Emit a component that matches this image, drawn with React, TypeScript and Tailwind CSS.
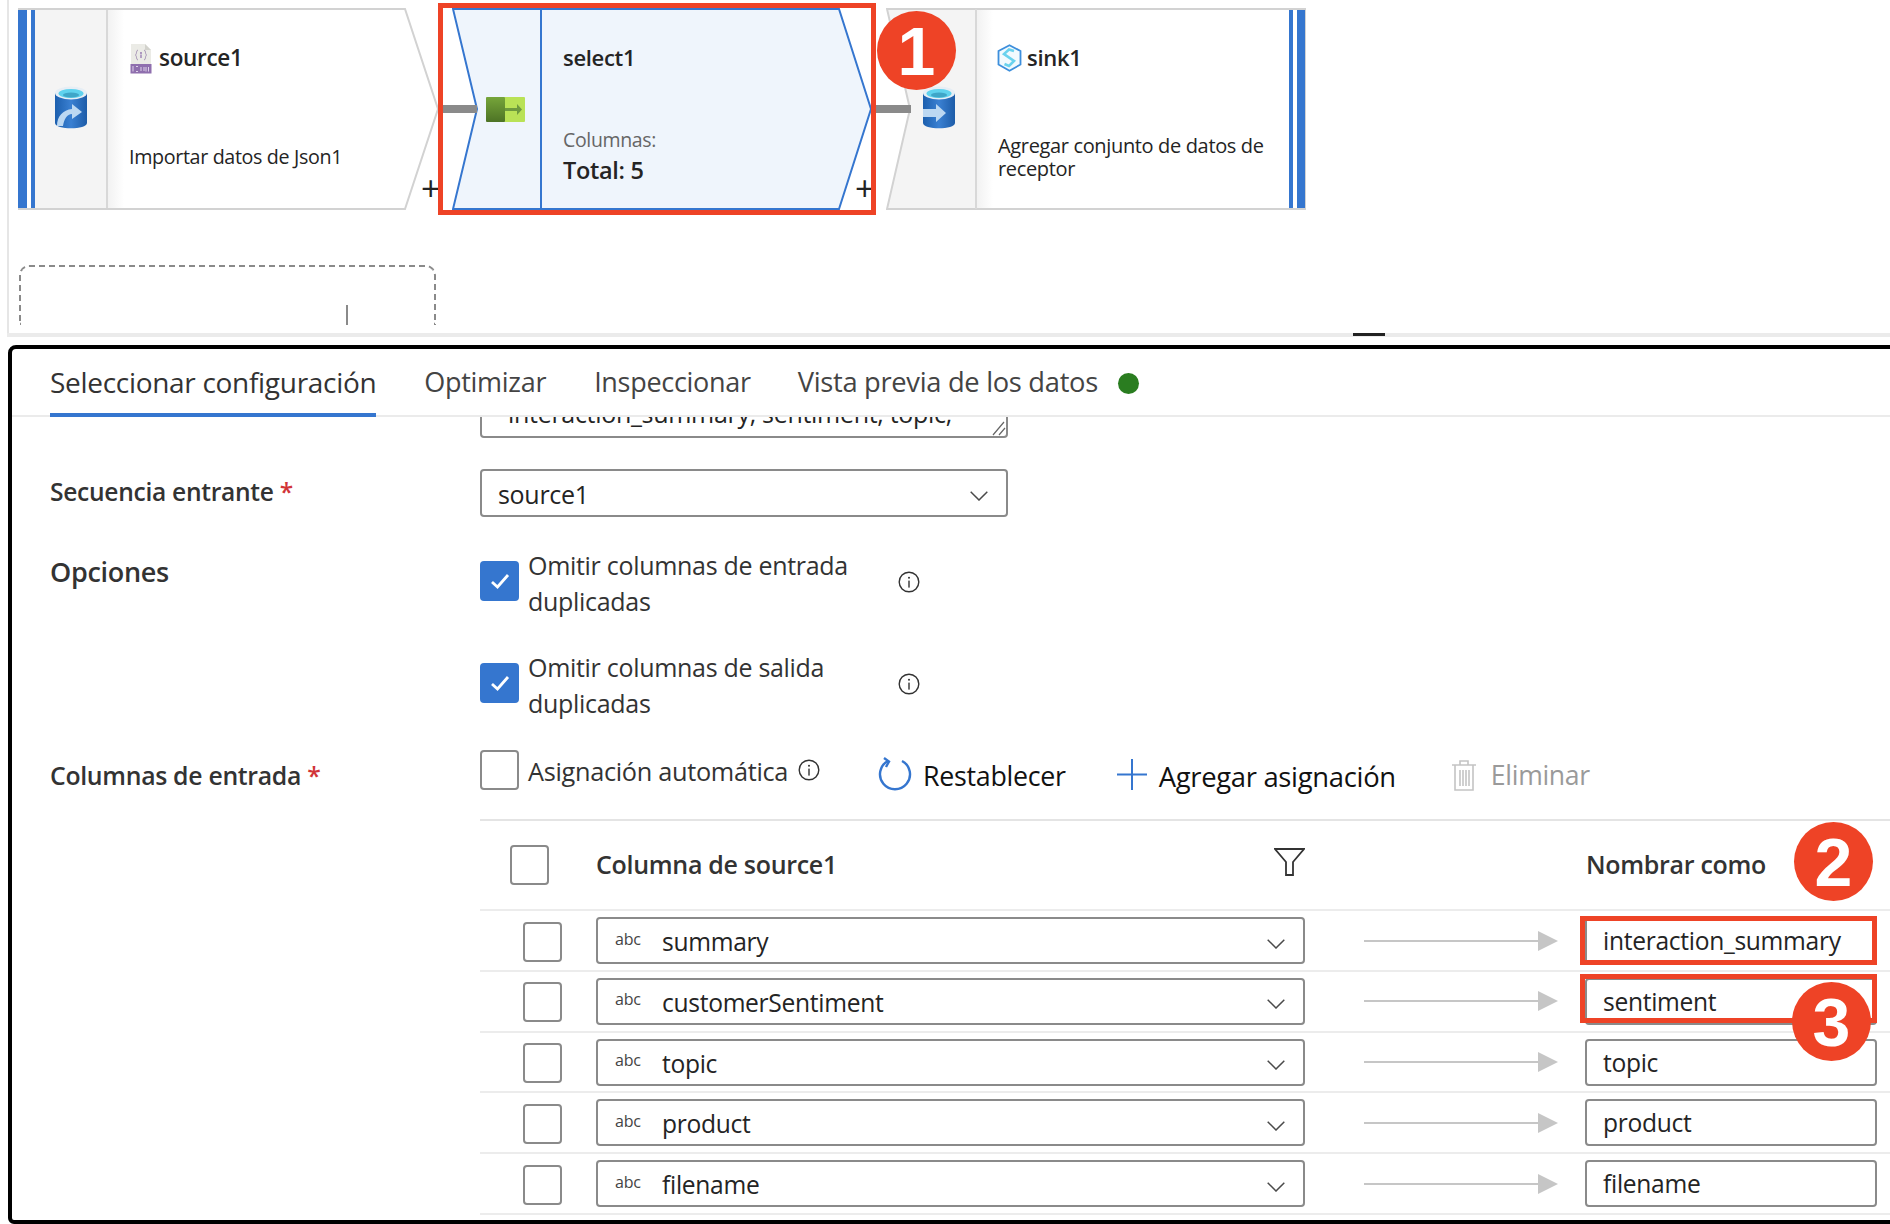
import React from "react";

const BLUE = "#3576cf";

function Chevron() {
  return (
    <svg width="18" height="10" viewBox="0 0 18 10" className="shrink-0">
      <polyline points="0.7,0.7 9,9 17.3,0.7" fill="none" stroke="#4a4a4a" strokeWidth="1.5" />
    </svg>
  );
}

function Info() {
  return (
    <svg width="22" height="22" viewBox="0 0 22 22" className="shrink-0">
      <circle cx="11" cy="11" r="9.8" fill="none" stroke="#333" strokeWidth="1.4" />
      <circle cx="11" cy="6.8" r="1" fill="#333" />
      <rect x="10.3" y="9.6" width="1.4" height="7" fill="#333" />
    </svg>
  );
}

function Check() {
  return (
    <span className="mt-[13px] flex h-[40px] w-[39px] shrink-0 items-center justify-center rounded-[4px] bg-[#3576cf]">
      <svg width="20" height="16" viewBox="0 0 20 16">
        <polyline points="2,9 7.5,14 18,2" fill="none" stroke="#fff" strokeWidth="2.8" />
      </svg>
    </span>
  );
}

function Box() {
  return <span className="block h-[40px] w-[39px] shrink-0 rounded-[4px] border-2 border-[#8a8a8a] bg-white" />;
}

function Cyl({ id, out }: { id: string; out?: boolean }) {
  return (
    <svg width="34" height="43" viewBox="0 0 34 43">
      <defs>
        <linearGradient id={id} x1="0" x2="1" y1="0" y2="0">
          <stop offset="0" stopColor="#1c5fae" />
          <stop offset="0.5" stopColor="#3a80d2" />
          <stop offset="1" stopColor="#1d5ca8" />
        </linearGradient>
      </defs>
      <path d="M1 7 V37 C1 44 33 44 33 37 V7 Z" fill={`url(#${id})`} />
      <ellipse cx="17" cy="7" rx="16" ry="6.5" fill="#e6eef5" />
      <ellipse cx="17" cy="7.5" rx="12.5" ry="4.5" fill="#5fd2ee" />
      <ellipse cx="17" cy="9" rx="8" ry="2.5" fill="#3fa6c8" />
      {out ? (
        <path d="M3 40 C3 30 9 24 18 23 V18 L28 26 L18 33 V28 C13 28 10 33 9 40 Z" fill="#bcd8f2" />
      ) : (
        <path d="M1 23 H14 V18 L24 27 L14 36 V31 H1 Z" fill="#bcd8f2" />
      )}
    </svg>
  );
}

function JsonIcon() {
  return (
    <svg width="22" height="30" viewBox="0 0 22 30" className="shrink-0">
      <path d="M1 0 H15 L21 6 V22 H1 Z" fill="#ebebe6" />
      <path d="M15 0 L21 6 H15 Z" fill="#d2d2cc" />
      <rect x="0.5" y="20" width="21" height="9.5" fill="#8f6fae" />
      <path d="M8 6 C6 6 7 10 5.5 11 C7 12 6 16 8 16 M14 6 C16 6 15 10 16.5 11 C15 12 16 16 14 16" fill="none" stroke="#9a86ad" strokeWidth="0.8" />
      <circle cx="11" cy="9" r="0.9" fill="#8f6fae" />
      <rect x="10.4" y="10.5" width="1.2" height="3.5" fill="#8f6fae" />
      <path d="M3 22 V27.5 M6 22.5 H8 M6 27.5 H8 M11 23 V27 M14 23 V27 M16 23 V27.5 M18.5 23 V27.5" stroke="#e8dff0" strokeWidth="0.9" fill="none" />
    </svg>
  );
}

function SelectIcon() {
  return (
    <svg width="39" height="25" viewBox="0 0 39 25">
      <defs>
        <linearGradient id="selg" x1="0" x2="0" y1="0" y2="1">
          <stop offset="0" stopColor="#76a53a" />
          <stop offset="1" stopColor="#4d7325" />
        </linearGradient>
      </defs>
      <rect x="18" y="0" width="21" height="25" rx="1" fill="#b9e256" />
      <rect x="0" y="0" width="19" height="25" rx="1" fill="url(#selg)" />
      <path d="M19 11 H31 V7 L36 12.5 L31 18 V14 H19 Z" fill="#6e9a3e" />
    </svg>
  );
}

function SinkIcon() {
  return (
    <svg width="25" height="28" viewBox="0 0 25 28" className="shrink-0">
      <path d="M12.5 1.2 L23.5 7 V20.5 L12.5 26.8 L1.5 20.5 V7 Z" fill="#f2fafe" stroke="#3d8fdc" strokeWidth="1.8" />
      <path d="M17 7 L12 5.5 L7 10 L17 17 L12 22 L7.5 20" fill="none" stroke="#6ad2ee" strokeWidth="2.6" />
    </svg>
  );
}

function Badge({ n, className }: { n: number; className: string }) {
  return (
    <div
      className={`absolute z-20 flex h-[79px] w-[79px] items-center justify-center rounded-full bg-[#ee4326] font-['Liberation_Sans',sans-serif] text-[68px] font-bold leading-none text-white ${className}`}
    >
      {n}
    </div>
  );
}

const rows = [
  ["summary", "interaction_summary"],
  ["customerSentiment", "sentiment"],
  ["topic", "topic"],
  ["product", "product"],
  ["filename", "filename"],
];

export default function App() {
  return (
    <div className="relative h-[1224px] w-[1890px] overflow-hidden bg-white font-['Open_Sans',sans-serif] text-[#242424]">
      {/* Canvas: a free diagram surface, the nodes are placed on it */}
      <div className="relative h-[333px]">
        <div className="ml-[7px] h-full border-l-2 border-[#e6e6e6]" />

        {/* source */}
        <div className="absolute left-[18px] top-[8px] h-[202px] w-[422px]">
          <svg width="422" height="202" className="absolute inset-0">
            <polygon points="1,1 387,1 420,101 387,201 1,201" fill="#fff" stroke="#d2d2d2" strokeWidth="2" />
          </svg>
          <div className="relative flex h-full py-[2px]">
            <div className="w-[9px] bg-[#3576cf]" />
            <div className="w-[4px] bg-white" />
            <div className="w-[4px] bg-[#3576cf]" />
            <div className="flex w-[73px] items-center justify-center border-r-2 border-[#d8d8d8] bg-[#f4f4f4] pb-[4px]">
              <Cyl id="c1" out />
            </div>
            <div className="flex w-[280px] flex-col bg-linear-to-r from-[#f2f2f2] to-white to-[16px] pl-[21px] pt-[34px]">
              <div className="flex h-[30px] items-center gap-[7px] pl-[1px]">
                <JsonIcon />
                <span className="mb-[2px] text-[22.5px] font-semibold tracking-[-0.3px]">source1</span>
              </div>
              <div className="mt-[68px] whitespace-nowrap text-[19.7px] tracking-[-0.35px]">Importar datos de Json1</div>
            </div>
          </div>
          <div className="absolute left-[403px] top-[162px] text-[34px] font-normal leading-[36px]">+</div>
        </div>

        {/* connector 1 */}
        <div className="absolute left-[438px] top-[105px] z-10 h-[8px] w-[39px] bg-[#8a8a8a]" />

        {/* select */}
        <div className="absolute left-[452px] top-[8px] h-[202px] w-[421px]">
          <svg width="421" height="202" className="absolute inset-0">
            <polygon points="1,1 387,1 419,101 387,201 1,201 25,101" fill="#eff5fc" stroke="#3576cf" strokeWidth="2" />
            <line x1="89" y1="1" x2="89" y2="201" stroke="#3576cf" strokeWidth="2" />
          </svg>
          <div className="relative flex h-full py-[2px]">
            <div className="flex w-[90px] items-center pl-[34px]">
              <SelectIcon />
            </div>
            <div className="flex flex-col pl-[21px] pt-[32px]">
              <div className="text-[22px] font-semibold leading-[30px] tracking-[-0.3px]">select1</div>
              <div className="mt-[54px] text-[19.5px] leading-[27px] tracking-[-0.35px] text-[#666]">Columnas:</div>
              <div className="mt-[1px] text-[23.5px] font-semibold leading-[32px] tracking-[-0.3px]">Total: 5</div>
            </div>
          </div>
          <div className="absolute left-[403px] top-[162px] text-[34px] leading-[36px]">+</div>
        </div>

        {/* connector 2 */}
        <div className="absolute left-[876px] top-[105px] z-10 h-[8px] w-[35px] bg-[#8a8a8a]" />

        {/* sink */}
        <div className="absolute left-[886px] top-[8px] h-[202px] w-[420px]">
          <svg width="420" height="202" className="absolute inset-0">
            <polygon points="1,1 90,1 90,201 1,201 24,101" fill="#f4f4f4" />
            <polygon points="1,1 419,1 419,201 1,201 24,101" fill="none" stroke="#d2d2d2" strokeWidth="2" />
            <line x1="90" y1="1" x2="90" y2="201" stroke="#d8d8d8" strokeWidth="2" />
          </svg>
          <div className="relative flex h-full py-[2px] pr-[1px]">
            <div className="w-[91px] shrink-0 pl-[36px] pt-[76px]">
              <Cyl id="c2" />
            </div>
            <div className="flex flex-1 flex-col bg-linear-to-r from-[#f2f2f2] to-white to-[16px] pl-[20px] pt-[34px]">
              <div className="flex h-[28px] items-center gap-[5px]">
                <SinkIcon />
                <span className="mb-[2px] text-[22px] font-semibold tracking-[-0.3px]">sink1</span>
              </div>
              <div className="ml-[1px] mt-[62px] w-[280px] text-[20px] leading-[23px] tracking-[-0.35px]">
                Agregar conjunto de datos de receptor
              </div>
            </div>
            <div className="w-[4px] shrink-0 bg-[#3576cf]" />
            <div className="w-[4px] shrink-0 bg-white" />
            <div className="w-[8px] shrink-0 bg-[#3576cf]" />
          </div>
        </div>

        {/* dashed placeholder */}
        <div className="absolute left-[19px] top-[265px] flex h-[60px] w-[417px] items-end rounded-t-[10px] border-2 border-b-0 border-dashed border-[#8a8a8a] pl-[325px]">
          <div className="h-[20px] w-[2px] bg-[#8a8a8a]" />
        </div>

        {/* selection */}
        <div className="absolute left-[438px] top-[3px] z-10 h-[212px] w-[438px] border-[5px] border-[#ee4326]" />
        <Badge n={1} className="left-[877px] top-[11px]" />
      </div>

      {/* Splitter */}
      <div className="ml-[7px] h-[4px] bg-[#ebebeb] pl-[1346px]">
        <div className="h-[3px] w-[32px] bg-[#222]" />
      </div>

      {/* Panel */}
      <div className="ml-[8px] mt-[8px] h-[879px] w-[1900px] overflow-hidden rounded-t-[8px] rounded-bl-[6px] border-4 border-black">
        <div className="flex h-[68px] items-center gap-[48px] border-b-2 border-[#ebebeb] pl-[38px]">
          <div className="relative flex h-full items-center">
            <span className="text-[28px] font-medium tracking-[-0.3px] text-[#333]">Seleccionar configuración</span>
            <div className="absolute bottom-[-2px] left-0 right-0 h-[4px] bg-[#3576cf]" />
          </div>
          <span className="text-[27px] tracking-[-0.3px] text-[#444]">Optimizar</span>
          <span className="text-[27px] tracking-[-0.3px] text-[#444]">Inspeccionar</span>
          <span className="-ml-[1px] flex items-center gap-[20px] text-[27.3px] tracking-[-0.3px] text-[#444]">
            Vista previa de los datos
            <span className="mt-[2px] h-[21px] w-[21px] rounded-full bg-[#2a7d20]" />
          </span>
        </div>

        <div className="h-[805px] overflow-hidden">
          <div className="relative -mt-[20px] ml-[468px] h-[41px] w-[528px] rounded-[4px] border-2 border-[#8a8a8a] pl-[26px] text-[25px] leading-[34px] tracking-[-0.3px]">
            <span className="-mt-[3px] block">interaction_summary, sentiment, topic,</span>
            <svg width="16" height="16" viewBox="0 0 16 16" className="absolute bottom-0 right-0">
              <path d="M14 2 L3 15 M15 8 L9 15" stroke="#666" strokeWidth="1.2" fill="none" />
            </svg>
          </div>

          <div className="mt-[31px] grid grid-cols-[468px_1fr]">
            <div className="pl-[38px] pt-[5px] text-[24.6px] font-semibold tracking-[-0.3px] text-[#333]">
              Secuencia entrante <span className="text-[#d13438]">*</span>
            </div>
            <div className="flex h-[48px] w-[528px] items-center justify-between rounded-[4px] border-2 border-[#8a8a8a] pl-[16px] pr-[18px] text-[25px] tracking-[-0.3px]">
              <span className="mt-[4px]">source1</span>
              <span className="mt-[6px]">
                <Chevron />
              </span>
            </div>

            <div className="mt-[31px] pl-[38px] pt-[4px] text-[27px] font-semibold tracking-[-0.3px] text-[#333]">Opciones</div>
            <div className="mt-[31px] flex h-[72px] items-start">
              <Check />
              <span className="-mt-[1px] ml-[9px] w-[370px] text-[25px] leading-[36px] tracking-[-0.3px] text-[#333]">
                Omitir columnas de entrada duplicadas
              </span>
              <span className="mt-[23px]">
                <Info />
              </span>
            </div>

            <div />
            <div className="mt-[30px] flex h-[72px] items-start">
              <Check />
              <span className="-mt-[1px] ml-[9px] w-[370px] text-[25px] leading-[36px] tracking-[-0.3px] text-[#333]">
                Omitir columnas de salida duplicadas
              </span>
              <span className="mt-[23px]">
                <Info />
              </span>
            </div>

            <div className="mt-[35px] pl-[38px] text-[24.8px] font-semibold tracking-[-0.3px] text-[#333]">
              Columnas de entrada <span className="text-[#d13438]">*</span>
            </div>
            <div className="mt-[27px] flex h-[42px] items-start">
              <div className="flex items-center">
                <Box />
                <span className="ml-[9px] mt-[4px] text-[25.3px] tracking-[-0.3px] text-[#333]">Asignación automática</span>
                <span className="ml-[10px]">
                  <Info />
                </span>
              </div>
              <svg width="34" height="35" viewBox="0 0 34 35" className="ml-[58px] mt-[8px] shrink-0">
                <path d="M10 4 A15 15 0 1 0 24 4" fill="none" stroke={BLUE} strokeWidth="2.4" />
                <path d="M6 1 L11 4.5 L8 10" fill="none" stroke={BLUE} strokeWidth="2.4" />
              </svg>
              <span className="ml-[11px] mt-[7px] text-[26.8px] tracking-[-0.3px] text-[#111]">Restablecer</span>
              <svg width="30" height="31" viewBox="0 0 30 31" className="ml-[51px] mt-[10px] shrink-0">
                <path d="M15 0 V31 M0 15.5 H30" stroke={BLUE} strokeWidth="2" />
              </svg>
              <span className="ml-[12px] mt-[7px] text-[27.4px] tracking-[-0.3px] text-[#111]">Agregar asignación</span>
              <svg width="26" height="33" viewBox="0 0 26 33" className="ml-[55px] mt-[10px] shrink-0">
                <path d="M1 6 H25 M9 6 V2 H17 V6 M4 6 V31 H22 V6 M9 11 V27 M12 11 V27 M15 11 V27 M18 11 V27" fill="none" stroke="#c4c4c4" strokeWidth="1.6" />
              </svg>
              <span className="ml-[14px] mt-[7px] text-[26.6px] tracking-[-0.3px] text-[#9a9a9a]">Eliminar</span>
            </div>
          </div>

          {/* Table */}
          <div className="ml-[468px] mt-[25px] border-t-2 border-[#e4e4e4]">
            <div className="flex h-[90px] items-center border-b-2 border-[#ececec]">
              <div className="ml-[30px]">
                <Box />
              </div>
              <span className="ml-[47px] w-[678px] text-[25px] font-semibold tracking-[-0.3px] text-[#333]">Columna de source1</span>
              <svg width="31" height="28" viewBox="0 0 31 28" className="-mt-[7px] shrink-0">
                <path d="M1 1 H30 L19 14 V27 H12 V14 Z" fill="none" stroke="#333" strokeWidth="1.8" />
              </svg>
              <span className="ml-[281px] text-[25px] font-semibold tracking-[-0.3px] text-[#333]">Nombrar como</span>
            </div>
            {rows.map(([src, dst]) => (
              <div key={src} className="flex h-[60.75px] items-center border-b-2 border-[#ececec]">
                <div className="ml-[43px] mt-[2px]">
                  <Box />
                </div>
                <div className="ml-[34px] flex h-[47px] w-[709px] items-center rounded-[4px] border-2 border-[#8a8a8a] pl-[17px] pr-[18px]">
                  <span className="mb-[4px] w-[47px] text-[16px] tracking-[-0.2px] text-[#444]">abc</span>
                  <span className="mt-[4px] flex-1 text-[24.6px] tracking-[-0.3px]">{src}</span>
                  <span className="mt-[6px]">
                    <Chevron />
                  </span>
                </div>
                <div className="ml-[59px] flex w-[194px] items-center">
                  <div className="h-[2px] flex-1 bg-[#c6c6c6]" />
                  <svg width="20" height="20" viewBox="0 0 20 20" className="shrink-0">
                    <polygon points="0,0 20,10 0,20" fill="#c6c6c6" />
                  </svg>
                </div>
                <div className="ml-[27px] flex h-[47px] w-[292px] items-center rounded-[4px] border-2 border-[#8a8a8a] pl-[16px] text-[24.6px] tracking-[-0.3px]">
                  <span className="mt-[2px]">{dst}</span>
                </div>
              </div>
            ))}
          </div>
        </div>
      </div>

      {/* Annotations drawn over the table */}
      <div className="absolute left-[1580px] top-[916px] h-[49px] w-[297px] border-[5px] border-[#ee4326]" />
      <div className="absolute left-[1580px] top-[974px] h-[49px] w-[297px] border-[5px] border-[#ee4326]" />
      <Badge n={2} className="left-[1794px] top-[822px]" />
      <Badge n={3} className="left-[1792px] top-[982px]" />
    </div>
  );
}
